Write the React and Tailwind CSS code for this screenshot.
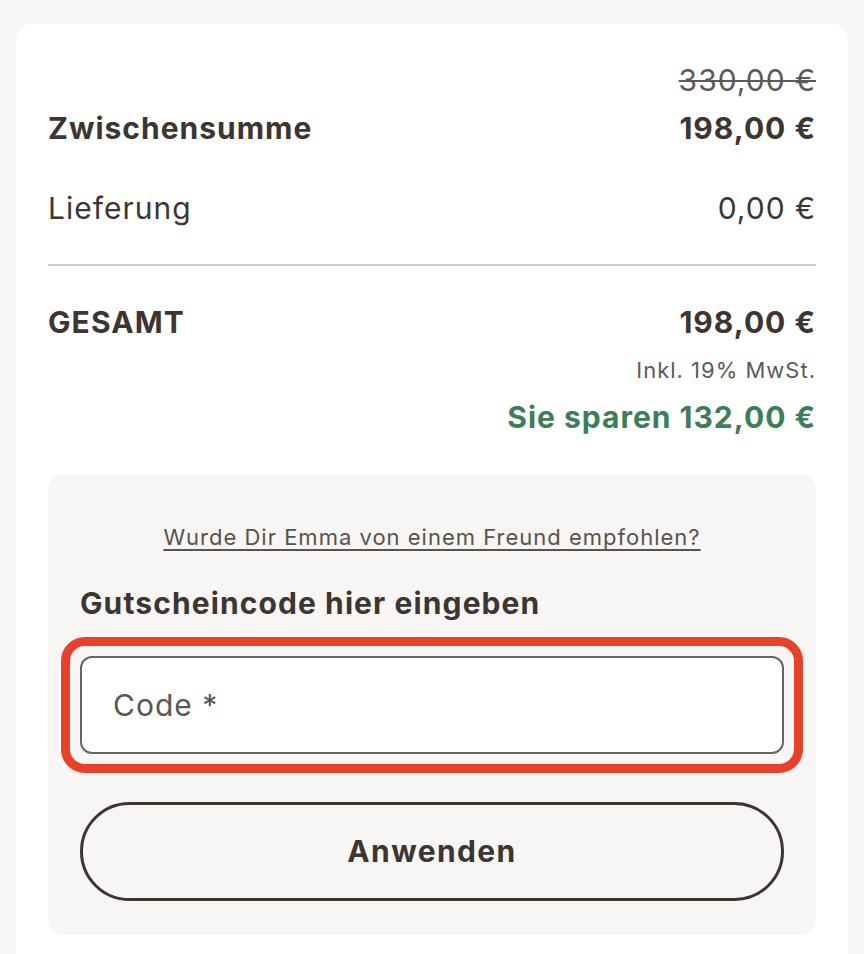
export default function App() {
  return (
    <div className="min-h-screen bg-[#f7f6f4] pt-6 px-4 font-['Inter','Liberation_Sans',sans-serif] text-[#3d3532] tracking-[1px]">
      <div className="bg-white rounded-2xl px-8 pt-9 pb-10">
        <div className="flex justify-end">
          <span className="text-[30px] leading-[40px] text-[#5f5955] line-through decoration-2">330,00 €</span>
        </div>
        <div className="flex justify-between items-center mt-2 h-10">
          <span className="text-[30px] font-bold tracking-[1px]">Zwischensumme</span>
          <span className="text-[30px] font-bold tracking-[1px]">198,00 €</span>
        </div>
        <div className="flex justify-between items-center mt-10 h-10">
          <span className="text-[30px]">Lieferung</span>
          <span className="text-[30px]">0,00 €</span>
        </div>
        <div className="h-[2px] bg-[#cfccc8] mt-9" />
        <div className="flex justify-between items-center mt-9 h-10">
          <span className="text-[30px] font-bold tracking-[1.1px]">GESAMT</span>
          <span className="text-[30px] font-bold tracking-[1px]">198,00 €</span>
        </div>
        <div className="flex justify-end mt-[14px]">
          <span className="text-[22px] leading-7 text-[#5f5955]">Inkl. 19% MwSt.</span>
        </div>
        <div className="flex justify-end mt-[13px]">
          <span className="text-[30px] leading-10 font-bold tracking-[1px] text-[#3d7d58]">Sie sparen 132,00 €</span>
        </div>

        <div className="mt-[37px] bg-[#f7f6f4] rounded-2xl px-8 pt-[49px] pb-[34px]">
          <div className="text-center">
            <a href="#" className="text-[22px] leading-7 text-[#5a524d] underline underline-offset-4">
              Wurde Dir Emma von einem Freund empfohlen?
            </a>
          </div>
          <h3 className="mt-8 text-[30px] leading-10 font-bold tracking-[1.1px]">Gutscheincode hier eingeben</h3>
          <div className="mt-[14px] -mx-[19px] border-[9px] border-[#e8412a] rounded-[24px] p-[10px]">
            <div className="h-[98px] bg-white border-2 border-[#6b6560] rounded-xl flex items-center pl-[31px]">
              <span className="text-[30px] text-[#5c5550]">Code *</span>
            </div>
          </div>
          <button className="mt-[29px] w-full h-[99px] border-[3px] border-[#3d3532] rounded-full text-[30px] font-bold tracking-[1.4px] text-[#3d3532]">
            Anwenden
          </button>
        </div>
      </div>
    </div>
  );
}
